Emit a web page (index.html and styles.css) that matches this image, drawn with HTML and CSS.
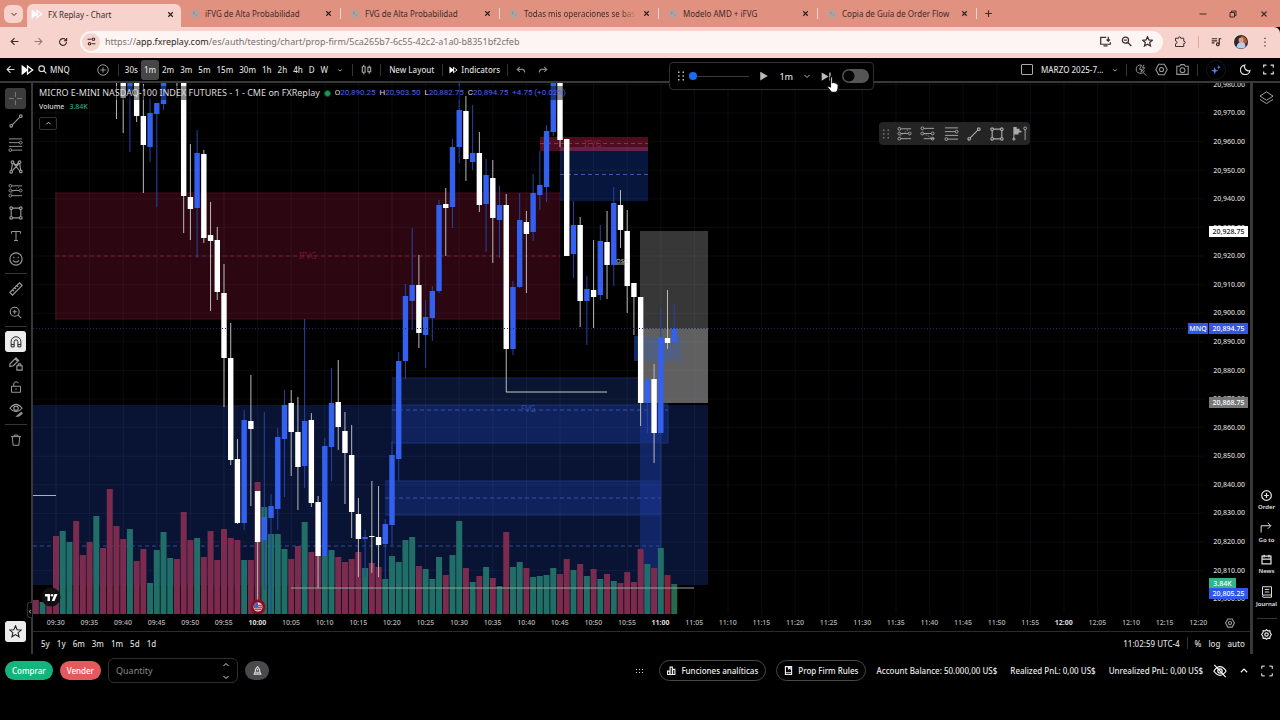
FILE: index.html
```
<!DOCTYPE html>
<html lang="es">
<head>
<meta charset="utf-8">
<title>FX Replay - Chart</title>
<link rel="stylesheet" href="styles.css">
</head>
<body>
<svg class="sprite" aria-hidden="true">
  <symbol id="x" viewBox="0 0 16 16"><path d="M4 4l8 8M12 4l-8 8"/></symbol>
  <symbol id="down" viewBox="0 0 16 16"><path d="M3 6l5 5 5-5"/></symbol>
  <symbol id="up" viewBox="0 0 16 16"><path d="M3 10l5-5 5 5"/></symbol>
  <symbol id="back" viewBox="0 0 16 16"><path d="M15 8H2M8 2L2 8l6 6"/></symbol>
  <symbol id="forward" viewBox="0 0 16 16"><path d="M1 8h13M8 2l6 6-6 6"/></symbol>
  <symbol id="reload" viewBox="0 0 16 16"><path d="M13.5 8A5.5 5.5 0 1 1 12 4.2L13.5 6M13.8 1.5V6H9.5"/></symbol>
  <symbol id="tune" viewBox="0 0 16 16"><path d="M1 4h7M8 12h7"/><circle cx="11.5" cy="4" r="2.2"/><circle cx="4.500" cy="12" r="2.200"/></symbol>
  <symbol id="logo" viewBox="0 0 20 16"><path class="solid" d="M1 0l10 8-10 8z"/><path d="M10 2l8 6-8 6V2z"/></symbol>
  <symbol id="globe" viewBox="0 0 16 16"><circle class="solid" cx="8" cy="8" r="7"/><path class="land" d="M4 5l3-1 1 2-2 3zM9 9l3-1-1 3z"/></symbol>
  <symbol id="search" viewBox="0 0 16 16"><circle cx="6.500" cy="6.500" r="5"/><path d="M10 10l5 5"/></symbol>
  <symbol id="plusc" viewBox="0 0 16 16"><circle cx="8" cy="8" r="7"/><path d="M8 4.500v7M4.500 8h7"/></symbol>
  <symbol id="plus" viewBox="0 0 16 16"><path d="M8 2v12M2 8h12"/></symbol>
  <symbol id="candles" viewBox="0 0 16 16"><path d="M2 4h4v8H2zM4 1v3M4 12v3M10 5h4v6h-4zM12 2v3M12 11v3"/></symbol>
  <symbol id="undo" viewBox="0 0 16 16"><path d="M6 3L2 7l4 4M2 7h8q4 0 4 5"/></symbol>
  <symbol id="redo" viewBox="0 0 16 16"><path d="M10 3l4 4-4 4M14 7H6q-4 0-4 5"/></symbol>
  <symbol id="hex" viewBox="0 0 16 16"><path d="M4.500 1.500h7L15 8l-3.500 6.500h-7L1 8z"/><circle cx="8" cy="8" r="2.500"/></symbol>
  <symbol id="camera" viewBox="0 0 16 16"><path d="M1 4h3.500L6 2h4l1.500 2H15v10H1z"/><circle cx="8" cy="8.800" r="3"/></symbol>
  <symbol id="flashsearch" viewBox="0 0 16 16"><path d="M8 1.500a5.500 5.500 0 1 0 4.500 7M10.500 11l4.500 4.500M9 1L6 7h3l-1 4 5-6h-3l2-4"/></symbol>
  <symbol id="spark" viewBox="0 0 16 16"><path class="solid" d="M6 3l1.500 4.500L12 9l-4.500 1.500L6 15l-1.500-4.500L0 9l4.500-1.500zM12.500 0l.9 2.600L16 3.500l-2.600.9-.9 2.600-.9-2.600-2.600-.9 2.600-.9z"/></symbol>
  <symbol id="moon" viewBox="0 0 16 16"><path d="M7 1.500a6 6 0 0 0 7.500 8A7 7 0 1 1 7 1.500z"/></symbol>
  <symbol id="full" viewBox="0 0 16 16"><path d="M1 5V1.500h4M11 1.500h4V5M15 11v3.500h-4M5 14.500H1V11"/></symbol>
  <symbol id="install" viewBox="0 0 16 16"><path d="M9 2H1v10h14V9M5 14.500h6M12 1v6M9.500 5L12 7.500 14.500 5"/></symbol>
  <symbol id="zoomout" viewBox="0 0 16 16"><circle cx="6.500" cy="6" r="4.500"/><path d="M10 9.500l5 5M4.500 6h4"/></symbol>
  <symbol id="star" viewBox="0 0 16 16"><path d="M8 1l2 4.800 5 .4-3.800 3.300 1.200 5L8 11.800 3.600 14.500l1.200-5L1 6.200l5-.4z"/></symbol>
  <symbol id="puzzle" viewBox="0 0 16 16"><path d="M2 3h4q0-2 1.500-2T9 3h4v4q2 0 2 1.500T13 10v4H2v-3.500q2 0 2-2T2 6.500z"/></symbol>
  <symbol id="music" viewBox="0 0 16 16"><path d="M1 4h8M1 7h8M1 10h4M12 12V4h3"/><circle cx="10" cy="12" r="2"/></symbol>
  <symbol id="dots" viewBox="0 0 16 16"><path class="solid" d="M7 1h2v2H7zM7 7h2v2H7zM7 13h2v2H7z"/></symbol>
  <symbol id="cross" viewBox="0 0 16 16"><path d="M8 0v6M8 10v6M0 8h6M10 8h6"/></symbol>
  <symbol id="line" viewBox="0 0 16 16"><circle cx="2.500" cy="13.500" r="1.500"/><circle cx="13.500" cy="2.500" r="1.500"/><path d="M3.600 12.400l8.800-8.800"/></symbol>
  <symbol id="fib" viewBox="0 0 16 16"><path d="M1 2h14M1 6h11M1 10h14M4 14h11"/><circle cx="13.500" cy="6" r="1.500"/><circle cx="2.500" cy="14" r="1.500"/></symbol>
  <symbol id="xabcd" viewBox="0 0 16 16"><path d="M2.500 12L4 4M5 4l7 8M11.500 4L4 12M12.300 4l1 8M5.500 3.500L8 6l3-3"/><circle cx="2.500" cy="13.500" r="1.500"/><circle cx="4" cy="2.500" r="1.500"/><circle cx="12" cy="2.500" r="1.500"/><circle cx="13.500" cy="13" r="1.500"/></symbol>
  <symbol id="pos" viewBox="0 0 16 16"><path d="M4 3h11M4 8h8M4 13.500h11"/><path stroke-dasharray="1 1.500" d="M3 11L12 4"/><circle cx="2.500" cy="3" r="1.500"/><circle cx="2.500" cy="8" r="1.500"/><circle cx="13.500" cy="8" r="1.500"/><circle cx="2.500" cy="13.500" r="1.500"/></symbol>
  <symbol id="short" viewBox="0 0 16 16"><path d="M4 2.500h11M4 8h8M4 13.500h11"/><path stroke-dasharray="1 1.500" d="M4 8l9 5"/><circle cx="2.500" cy="2.500" r="1.500"/><circle cx="2.500" cy="8" r="1.500"/><circle cx="13.500" cy="8" r="1.500"/><circle cx="13.500" cy="13.500" r="1.500"/></symbol>
  <symbol id="rect" viewBox="0 0 16 16"><path d="M4 2.500h8M4 13.500h8M2.500 4v8M13.500 4v8"/><circle cx="2.500" cy="2.500" r="1.500"/><circle cx="13.500" cy="2.500" r="1.500"/><circle cx="2.500" cy="13.500" r="1.500"/><circle cx="13.500" cy="13.500" r="1.500"/></symbol>
  <symbol id="ttool" viewBox="0 0 16 16"><path d="M2 5V2h12v3M8 2v12M5.500 14h5"/></symbol>
  <symbol id="smile" viewBox="0 0 16 16"><circle cx="8" cy="8" r="7"/><path d="M4.500 9.500q3.500 4 7 0M5.500 5.500v1.500M10.500 5.500v1.500"/></symbol>
  <symbol id="ruler" viewBox="0 0 16 16"><path d="M1 12L12 1l3 3L4 15zM4 9l1.500 1.500M6.500 6.500L8 8M9 4l1.500 1.500"/></symbol>
  <symbol id="zoomin" viewBox="0 0 16 16"><circle cx="7" cy="7" r="5.500"/><path d="M11 11l4 4M7 4.500v5M4.500 7h5"/></symbol>
  <symbol id="magnet" viewBox="0 0 16 16"><path d="M1.500 14.500V7.500a6.500 6.500 0 0 1 13 0v7h-4v-7a2.500 2.500 0 0 0-5 0v7zM1.500 11.500h4M10.500 11.500h4"/></symbol>
  <symbol id="penlock" viewBox="0 0 16 16"><path d="M1 11V8l7-7 3 3-6 6zM7 2l3 3M9 10h6v5H9zM10.500 10V8.500q1.500-2 3 0V10"/></symbol>
  <symbol id="lock" viewBox="0 0 16 16"><path d="M2 7h12v8H2zM5 7V4q0-3 3-3t3 2M8 10v2"/></symbol>
  <symbol id="eyepen" viewBox="0 0 16 16"><path d="M1 6q7-9 14 0-7 8-14 0zM9 15l5-4 1 1-4 3z"/><circle cx="8" cy="6" r="2.500"/></symbol>
  <symbol id="trash" viewBox="0 0 16 16"><path d="M1.500 3.500h13M5.500 3.500v-2h5v2M3 3.500l1.200 11.500h7.600L13 3.500"/></symbol>
  <symbol id="layers" viewBox="0 0 16 16"><path d="M8 2l7 4.500L8 11 1 6.500zM1 10l7 4.500L15 10"/></symbol>
  <symbol id="goto" viewBox="0 0 16 16"><path d="M1.500 14V5H14M10.500 1L14.500 5l-4 4"/></symbol>
  <symbol id="cal" viewBox="0 0 16 16"><path d="M1.500 3h13v11.500h-13zM1.500 7.500h13M4.500 1v4M11.500 1v4"/></symbol>
  <symbol id="journal" viewBox="0 0 16 16"><path d="M2 12V1h12v11M4 12h10v3H4q-2 0-2-1.500T4 12M5 4.500h6M5 8h6"/></symbol>
  <symbol id="bars" viewBox="0 0 16 16"><path d="M1 9h4v6H1zM5.500 2h4v13h-4zM10 6h4v9h-4z"/></symbol>
  <symbol id="book" viewBox="0 0 16 16"><path d="M2.500 1h11v11h-11zM2.500 12v3h11v-3"/><path class="solid" d="M7 1h5v6L9.500 5 7 7z"/></symbol>
  <symbol id="eyeoff" viewBox="0 0 16 16"><path d="M1 8q7-10 14 0-7 10-14 0zM1.500 1l13 14"/><circle cx="8" cy="8" r="2.500"/></symbol>
  <symbol id="rocket" viewBox="0 0 16 16"><path d="M8 1Q3.500 5 4 11h8q.5-6-4-10zM4 10l-2 4.500h12L12 10M7 14h2M8 5v3"/></symbol>
  <symbol id="gear" viewBox="0 0 16 16"><path d="M8 1l2 1.800 2.800-.3.400 2.700L15 8l-1.800 2.800-.4 2.700-2.800-.3L8 15l-2-1.800-2.800.3-.4-2.700L1 8l1.800-2.800.4-2.700 2.800.3z"/><circle cx="8" cy="8" r="2.500"/></symbol>
  <symbol id="grip" viewBox="0 0 10 16"><path class="solid" d="M1 2h2v2H1zM7 2h2v2H7zM1 7h2v2H1zM7 7h2v2H7zM1 12h2v2H1zM7 12h2v2H7z"/></symbol>
  <symbol id="play" viewBox="0 0 16 16"><path class="solid" d="M2 1l12 7-12 7z"/></symbol>
  <symbol id="next" viewBox="0 0 16 16"><path class="solid" d="M1 2l10 6-10 6zM12 2h2v12h-2z"/></symbol>
  <symbol id="flag" viewBox="0 0 16 16"><path class="solid" d="M2 1h3v2h3v2h2v2H7v2H2z"/><path d="M2 1v14M14 4v11"/><circle cx="2" cy="14" r="1.200"/><circle cx="14" cy="2.500" r="1.500"/></symbol>
</svg>

<header class="browser">
  <nav class="tabs">
    <button class="tab-menu" aria-label="Buscar pestañas"><svg class="i8"><use href="#down"/></svg></button>
    <div class="tab tab-on"><svg class="logo white"><use href="#logo"/></svg><a href="#">FX Replay - Chart</a><button aria-label="Cerrar"><svg class="i9"><use href="#x"/></svg></button></div>
    <div class="tab"><svg class="i10 globe"><use href="#globe"/></svg><a href="#">iFVG de Alta Probabilidad</a><button aria-label="Cerrar"><svg class="i9"><use href="#x"/></svg></button></div>
    <div class="tab"><svg class="i10 globe"><use href="#globe"/></svg><a href="#">FVG de Alta Probabilidad</a><button aria-label="Cerrar"><svg class="i9"><use href="#x"/></svg></button></div>
    <div class="tab"><svg class="i10 globe"><use href="#globe"/></svg><a href="#" class="fade">Todas mis operaciones se basa</a><button aria-label="Cerrar"><svg class="i9"><use href="#x"/></svg></button></div>
    <div class="tab"><svg class="i10 globe"><use href="#globe"/></svg><a href="#">Modelo AMD + iFVG</a><button aria-label="Cerrar"><svg class="i9"><use href="#x"/></svg></button></div>
    <div class="tab"><svg class="i10 globe"><use href="#globe"/></svg><a href="#">Copia de Guía de Order Flow</a><button aria-label="Cerrar"><svg class="i9"><use href="#x"/></svg></button></div>
    <button class="new-tab" aria-label="Nueva pestaña"><svg class="i9"><use href="#plus"/></svg></button>
    <div class="window-buttons">
      <button aria-label="Minimizar"><svg class="i8" viewBox="0 0 16 16"><path d="M1 8h14"/></svg></button>
      <button aria-label="Restaurar"><svg class="i8" viewBox="0 0 16 16"><path d="M2 5h9v9H2zM5 5V2h9v9h-3"/></svg></button>
      <button aria-label="Cerrar ventana"><svg class="i10"><use href="#x"/></svg></button>
    </div>
  </nav>
  <div class="address">
    <div class="history">
      <button aria-label="Atrás"><svg class="i9"><use href="#back"/></svg></button>
      <button aria-label="Adelante" class="muted"><svg class="i9"><use href="#forward"/></svg></button>
      <button aria-label="Recargar"><svg class="i10"><use href="#reload"/></svg></button>
    </div>
    <div class="omnibox">
      <button class="site" aria-label="Información del sitio"><svg class="i9"><use href="#tune"/></svg></button>
      <a class="url" href="#">https://<b>app.fxreplay.com</b>/es/auth/testing/chart/prop-firm/5ca265b7-6c55-42c2-a1a0-b8351bf2cfeb</a>
      <button aria-label="Instalar"><svg class="i11"><use href="#install"/></svg></button>
      <button aria-label="Zoom"><svg class="i11"><use href="#zoomout"/></svg></button>
      <button aria-label="Marcador"><svg class="i11"><use href="#star"/></svg></button>
    </div>
    <div class="extras">
      <button aria-label="Extensiones"><svg class="i12"><use href="#puzzle"/></svg></button>
      <span class="bar"></span>
      <button aria-label="Multimedia"><svg class="i11"><use href="#music"/></svg></button>
      <button aria-label="Perfil"><svg class="avatar" viewBox="0 0 14 14"><circle cx="7" cy="7" r="7" fill="#33272b"/><path d="M7 1q6 0 6 7l-3 1-3-5z" fill="#b4582f"/><circle cx="7" cy="5" r="2.500" fill="#d9a184"/><path d="M2.500 12q1-5 5-5t4 5q-4 3-9 0z" fill="#b9cdea"/></svg></button>
      <button aria-label="Menú"><svg class="i10"><use href="#dots"/></svg></button>
    </div>
  </div>
</header>

<div class="app">
  <div class="toolbar">
    <button aria-label="Volver"><svg class="i9"><use href="#back"/></svg></button>
    <svg class="logo app-logo white"><use href="#logo"/></svg>
    <button class="symbol"><svg class="i9"><use href="#search"/></svg>MNQ</button>
    <button aria-label="Comparar" class="compare"><svg class="i12"><use href="#plusc"/></svg></button>
    <span class="bar"></span>
    <div class="intervals">
      <button>30s</button><button class="on">1m</button><button>2m</button><button>3m</button><button>5m</button><button>15m</button><button>30m</button><button>1h</button><button>2h</button><button>4h</button><button>D</button><button>W</button>
      <button aria-label="Más" class="more"><svg class="i6"><use href="#down"/></svg></button>
    </div>
    <span class="bar"></span>
    <button aria-label="Tipo de gráfico" class="wide gray"><svg class="i11"><use href="#candles"/></svg></button>
    <span class="bar"></span>
    <button class="wide">New Layout</button>
    <span class="bar"></span>
    <button class="wide indicators"><svg class="mini-logo white"><use href="#logo"/></svg>Indicators</button>
    <span class="bar"></span>
    <button aria-label="Deshacer" class="wide dim"><svg class="i10"><use href="#undo"/></svg></button>
    <button aria-label="Rehacer" class="dim"><svg class="i10"><use href="#redo"/></svg></button>
    <div class="toolbar-right">
      <input type="checkbox" class="box" aria-label="Diseño">
      <span class="pick"><select aria-label="Sesión"><option>MARZO 2025-7...</option></select><svg class="i6"><use href="#down"/></svg></span>
      <span class="bar"></span>
      <button aria-label="Búsqueda rápida" class="gray"><svg class="i12"><use href="#flashsearch"/></svg></button>
      <button aria-label="Ajustes" class="gray"><svg class="i13"><use href="#hex"/></svg></button>
      <button aria-label="Captura" class="gray"><svg class="i13"><use href="#camera"/></svg></button>
      <span class="bar"></span>
      <button aria-label="IA" class="ai"><svg class="i10"><use href="#spark"/></svg></button>
      <button aria-label="Tema" class="theme"><svg class="i11"><use href="#moon"/></svg></button>
      <button aria-label="Pantalla completa"><svg class="i11"><use href="#full"/></svg></button>
    </div>
  </div>

  <main class="main">
    <aside class="tools">
      <button class="on" aria-label="Cursor"><svg class="i13"><use href="#cross"/></svg></button>
      <button aria-label="Línea"><svg class="i14"><use href="#line"/></svg></button>
      <button aria-label="Fibonacci"><svg class="i15"><use href="#fib"/></svg></button>
      <button aria-label="Patrones"><svg class="i14"><use href="#xabcd"/></svg></button>
      <button aria-label="Predicción"><svg class="i15"><use href="#pos"/></svg></button>
      <button aria-label="Rectángulo"><svg class="i14"><use href="#rect"/></svg></button>
      <button aria-label="Texto"><svg class="i12"><use href="#ttool"/></svg></button>
      <button aria-label="Emoji"><svg class="i14"><use href="#smile"/></svg></button>
      <hr>
      <button aria-label="Regla"><svg class="i14"><use href="#ruler"/></svg></button>
      <button aria-label="Ampliar"><svg class="i13"><use href="#zoomin"/></svg></button>
      <hr>
      <button class="lit" aria-label="Imán"><svg class="i12"><use href="#magnet"/></svg></button>
      <button aria-label="Bloquear dibujo"><svg class="i14"><use href="#penlock"/></svg></button>
      <button aria-label="Bloquear"><svg class="i12"><use href="#lock"/></svg></button>
      <button aria-label="Ocultar"><svg class="i14"><use href="#eyepen"/></svg></button>
      <hr>
      <button aria-label="Borrar"><svg class="i12"><use href="#trash"/></svg></button>
      <button class="lit last" aria-label="Favoritos"><svg class="i13"><use href="#star"/></svg></button>
    </aside>

    <section class="chart">
      <div class="plot-row">
        <svg class="plot" id="plot" viewBox="33 83 1174 531" preserveAspectRatio="none" role="img" aria-label="Gráfico de velas MNQ"></svg>
        <div class="prices">
          <ol id="prices"></ol>
          <span class="tag t-white">20,928.75</span>
          <span class="tag t-blue">20,894.75</span>
          <span class="tag t-blue t-symbol">MNQ</span>
          <span class="tag t-gray">20,868.75</span>
          <span class="tag t-green">3.84K</span>
          <span class="tag t-low">20,805.25</span>
        </div>
        <div class="legend">
          <h1>MICRO E-MINI NASDAQ-100 INDEX FUTURES - 1 - CME on FXReplay</h1>
          <i class="dot"></i>
          <p>O<b>20,890.25</b></p><p>H<b>20,903.50</b></p><p>L<b>20,882.75</b></p><p>C<b>20,894.75</b></p><p><b>+4.75 (+0.02%)</b></p>
        </div>
        <div class="study"><span>Volume</span><em>3.84K</em></div>
        <button class="collapse" aria-label="Contraer"><svg class="i7"><use href="#up"/></svg></button>
        <svg class="tv" viewBox="0 0 20 20"><circle cx="10" cy="10" r="9.500" fill="#111"/><path fill="#fff" d="M4 7h5v7H6.500V9.500H4zM13.500 7h3l-3 7h-2.800z"/><circle cx="11" cy="8.300" r="1.300" fill="#fff"/></svg>
        <svg class="event" viewBox="0 0 16 16"><circle cx="8" cy="8" r="7.500" fill="#8b0d22"/><circle cx="8" cy="8" r="4.500" fill="#e8dfe8"/><path stroke="#c8405a" d="M4 8.500h8M4.500 10.500h7M8 6.500h4"/><path fill="#3566c8" d="M8 3.500V8H3.500Q4 4 8 3.500z"/></svg>
      </div>
      <div class="times"><ol id="times"></ol><button aria-label="Ajustes del eje"><svg class="i10"><use href="#hex"/></svg></button></div>
      <div class="ranges">
        <button>5y</button><button>1y</button><button>6m</button><button>3m</button><button>1m</button><button>5d</button><button>1d</button>
        <div class="ranges-right"><button>11:02:59 UTC-4</button><span class="bar"></span><button>%</button><button>log</button><button>auto</button></div>
      </div>
      <button class="handle" aria-label="Ocultar herramientas">‹</button>
    </section>

    <aside class="side">
      <button aria-label="Capas"><svg class="i15"><use href="#layers"/></svg></button>
      <button class="push"><svg class="i11"><use href="#plusc"/></svg>Order</button>
      <button><svg class="i12"><use href="#goto"/></svg>Go to</button>
      <button><svg class="i11"><use href="#cal"/></svg>News</button>
      <button><svg class="i12"><use href="#journal"/></svg>Journal</button>
      <hr>
      <button aria-label="Configuración" class="settings"><svg class="i11"><use href="#gear"/></svg></button>
    </aside>
  </main>

  <footer class="trade">
    <button class="buy">Comprar</button>
    <button class="sell">Vender</button>
    <div class="quantity"><input type="text" placeholder="Quantity" aria-label="Quantity"><span><button aria-label="Más"><svg class="i8"><use href="#up"/></svg></button><button aria-label="Menos"><svg class="i8"><use href="#down"/></svg></button></span></div>
    <button class="rocket" aria-label="Orden rápida"><svg class="i9"><use href="#rocket"/></svg></button>
    <div class="trade-right">
      <svg class="six" viewBox="0 0 10 6"><path class="solid" d="M1 1h1v1H1zM4 1h1v1H4zM7 1h1v1H7zM1 4h1v1H1zM4 4h1v1H4zM7 4h1v1H7z"/></svg>
      <button class="pill"><svg class="i9"><use href="#bars"/></svg>Funciones analíticas</button>
      <button class="pill"><svg class="i9"><use href="#book"/></svg>Prop Firm Rules</button>
      <span class="money">Account Balance: 50.000,00 US$</span>
      <span class="money">Realized PnL: 0,00 US$</span>
      <span class="money">Unrealized PnL: 0,00 US$</span>
      <button aria-label="Ocultar saldo"><svg class="i14"><use href="#eyeoff"/></svg></button>
      <button aria-label="Desplegar"><svg class="i10"><use href="#up"/></svg></button>
      <button aria-label="Expandir"><svg class="i12"><use href="#full"/></svg></button>
    </div>
  </footer>

  <div class="replay">
    <svg class="grip"><use href="#grip"/></svg>
    <input type="range" min="0" max="100" value="0" aria-label="Velocidad">
    <button aria-label="Reproducir"><svg class="i10"><use href="#play"/></svg></button>
    <span class="pick"><select aria-label="Intervalo"><option>1m</option></select><svg class="i8"><use href="#down"/></svg></span>
    <button aria-label="Siguiente"><svg class="i11"><use href="#next"/></svg></button>
    <input type="checkbox" class="switch" aria-label="Automático">
  </div>
  <svg class="hand" viewBox="0 0 12 16"><path fill="#fff" stroke="#111" d="M4 8V2q0-1.500 1-1.500T6 2v4q2-1 2.500.5 1.500-.5 1.800.8 1.200 0 1.200 1.700 0 6-2.500 6.500H5L1 10.500Q1 8.500 4 10z"/></svg>
  <div class="favorites">
    <svg class="grip"><use href="#grip"/></svg>
    <button aria-label="Posición larga"><svg class="i15"><use href="#pos"/></svg></button>
    <button aria-label="Posición corta"><svg class="i15"><use href="#short"/></svg></button>
    <button aria-label="Fibonacci"><svg class="i15"><use href="#fib"/></svg></button>
    <button aria-label="Línea"><svg class="i14"><use href="#line"/></svg></button>
    <button aria-label="Rectángulo"><svg class="i14"><use href="#rect"/></svg></button>
    <button aria-label="Perfil de volumen"><svg class="i15"><use href="#flag"/></svg></button>
  </div>
</div>
<script src="chart.js"></script>
</body>
</html>
```
FILE: styles.css
```
* { box-sizing: border-box; }
body { margin: 0; height: 100vh; min-height: 600px; display: flex; flex-direction: column; background: #000; color: #ddd; font-family: "Noto Sans", "Open Sans", sans-serif; font-size: 8px; overflow: hidden; }
button, input, select { font: inherit; color: inherit; background: none; border: 0; padding: 0; margin: 0; }
button { display: flex; align-items: center; justify-content: center; white-space: nowrap; }
a { color: inherit; text-decoration: none; }
svg { flex: none; fill: none; stroke: currentColor; stroke-width: 1.3; display: block; }
.solid { fill: currentColor; stroke: none; }
.land { fill: #8793a5; stroke: none; }
.sprite { position: absolute; width: 0; height: 0; }
.i6 { width: 6px; height: 6px; stroke-width: 2; }
.i7 { width: 7px; height: 7px; stroke-width: 2; }
.i8 { width: 8px; height: 8px; stroke-width: 2; }
.i9 { width: 9px; height: 9px; stroke-width: 2; }
.i10 { width: 10px; height: 10px; stroke-width: 1.8; }
.i11 { width: 11px; height: 11px; stroke-width: 1.8; }
.i12 { width: 12px; height: 12px; }
.i13 { width: 13px; height: 13px; }
.i14 { width: 14px; height: 14px; }
.i15 { width: 15px; height: 15px; stroke-width: 1; }
.logo { width: 12px; height: 10px; }
.white { color: #fff; stroke-width: 2; }
.app-logo { width: 13px; height: 12px; }
.mini-logo { width: 9px; height: 8px; }
.bar { width: 1px; height: 12px; background: #333; flex: none; }
hr { width: 22px; height: 1px; border: 0; margin: 2px auto 3px; background: #353535; }
ol { list-style: none; margin: 0; padding: 0; }

.browser { color: #3f2b29; flex: none; }
.tabs { display: flex; align-items: center; height: 27px; padding-left: 4px; background: #e19180; }
.tab-menu { width: 19px; height: 18px; border-radius: 6px; background: #f6d3cd; margin-right: 4px; }
.tab { flex: 0 1 159px; display: flex; align-items: center; gap: 5px; height: 19px; padding: 0 7px 0 9px; position: relative; min-width: 0; }
.tab a { flex: 1; overflow: hidden; white-space: nowrap; }
.tab .i9 { color: #26201f; }
.tab + .tab:not(:nth-child(3)) { border-left: 1px solid #f6d3cd; height: 11px; }
.tab-on { flex-basis: 154px; align-self: flex-end; height: 23px; padding: 0 6px 3px 4px; border-radius: 6px 6px 0 0; background: #f6d3cd; }
.globe { color: #b3a19f; }
.fade { -webkit-mask-image: linear-gradient(90deg, #000 85%, transparent); mask-image: linear-gradient(90deg, #000 85%, transparent); }
.new-tab { border-left: 1px solid #f6d3cd; height: 11px; padding-left: 7px; }
.window-buttons { margin-left: auto; display: flex; gap: 22px; padding-right: 11px; }
.address { display: flex; align-items: center; height: 31px; padding: 0 10px 2px; background: #f6d3cd; border-radius: 0 6px 0 0; }
.history { display: flex; gap: 15px; margin-right: 12px; }
.muted { color: #9a7773; }
.omnibox { flex: 1; display: flex; align-items: center; gap: 10px; height: 22px; padding: 0 10px 0 2px; border-radius: 11px; background: #fcf5f3; min-width: 0; }
.site { width: 18px; height: 18px; border-radius: 9px; background: #f6d3cd; margin-right: -5px; }
.url { flex: 1; font-size: 9px; color: #7b706e; overflow: hidden; white-space: nowrap; }
.url b { font-weight: 400; color: #2d2524; }
.extras { display: flex; align-items: center; gap: 12px; padding-left: 11px; }
.extras .bar { background: #e6a79b; }
.avatar { width: 14px; height: 14px; stroke: none; }

.app { flex: 1; display: flex; flex-direction: column; position: relative; min-height: 0; }
.toolbar { display: flex; align-items: center; height: 25px; padding: 0 6px; border-bottom: 2px solid #383838; flex: none; font-weight: 500; }
.symbol { gap: 3px; margin-left: 4px; }
.app-logo { margin-left: 6px; }
.compare { color: #999; margin: 0 9px 0 27px; }
.intervals { display: flex; padding: 0 6px 0 3px; }
.intervals button { padding: 0 3px; height: 20px; border-radius: 3px; }
.intervals .on { background: #464646; }
.intervals .more { margin-left: 3px; }
.wide { margin: 0 8px; }
.indicators { gap: 3px; margin: 0 7px 0 6px; }
.dim { color: #888; margin-right: 12px; }
.toolbar-right { margin-left: auto; display: flex; align-items: center; gap: 8px; }
.box { appearance: none; width: 12px; height: 11px; border: 1px solid #aaa; border-radius: 1px; }
.pick { display: flex; align-items: center; gap: 8px; }
.pick select { appearance: none; font-weight: 500; }
.gray { color: #999; }
.ai { width: 20px; height: 20px; border-radius: 10px; border: 1px solid #14161c; color: #5b82f2; }
.theme { margin: 0 4px 0 6px; }

.main { flex: 1; display: flex; min-height: 0; }
.tools { width: 31px; padding: 5px 5px 0; display: flex; flex-direction: column; gap: 1px; color: #9b9b9b; }
.tools button { height: 22px; width: 21px; flex: none; border-radius: 3px; }
.tools .on { background: #3c3c3c; color: #777; height: 21px; }
.tools .lit { background: #ececec; color: #222; height: 21px; }
.tools .last { margin-top: auto; margin-bottom: 13px; }
.chart { flex: 1; display: flex; flex-direction: column; position: relative; min-width: 0; border-left: 2px solid #383838; border-right: 3px solid #383838; margin-bottom: 1px; }
.plot-row { flex: 1; display: flex; position: relative; min-height: 0; overflow: hidden; }
.plot { flex: 1; min-width: 0; height: 100%; stroke: none; }
.plot text { font-size: 8px; }
.prices { width: 43px; position: relative; font-size: 7px; font-weight: 500; color: #d4d4d4; }
#prices { position: absolute; inset: -13px 0 1px; display: grid; grid-auto-rows: 1fr; align-items: center; text-align: right; padding-right: 5px; }
.tag { position: absolute; left: 2px; width: 39px; height: 11px; margin-top: 1px; line-height: 11px; text-align: center; color: #fff; }
.t-white { top: 27%; margin-top: 0; background: #fff; color: #111; }
.t-blue { top: 45%; background: #2f58e8; }
.t-symbol { left: -19px; width: 20px; }
.t-gray { top: 59%; background: #77777b; }
.t-green { top: 93%; width: 27px; background: #35b48a; }
.t-low { top: 95%; background: #2f58e8; }
.legend { position: absolute; top: 3px; left: 6px; right: 60px; display: flex; align-items: center; gap: 4px; white-space: nowrap; font-family: Roboto, "Noto Sans", sans-serif; line-height: 14px; }
.legend h1, .legend p { margin: 0; background: rgba(0, 0, 0, .45); }
.legend h1 { font-family: "Noto Sans", "Open Sans", sans-serif; font-size: 9px; font-weight: 400; }
.legend b { font-weight: 400; color: #4a66ec; }
.dot { width: 7px; height: 7px; border-radius: 4px; background: #18985f; border: 1px solid #0b4a2d; }
.study { position: absolute; top: 18px; left: 6px; display: flex; gap: 5px; font-size: 7px; font-weight: 500; line-height: 12px; }
.study em { font-style: normal; color: #35a87d; }
.collapse { position: absolute; top: 34px; left: 6px; width: 18px; height: 13px; border: 1px solid #333; border-radius: 2px; }
.tv { position: absolute; left: 8px; bottom: 7px; width: 20px; height: 20px; stroke: none; }
.event { position: absolute; left: 18%; margin-left: -2px; bottom: -1px; width: 16px; height: 16px; stroke: none; }
.times { display: flex; height: 18px; border-bottom: 1px solid #2c2c2c; padding-left: 6px; font-size: 7px; font-weight: 500; color: #b8b8b8; }
#times { flex: 1; display: grid; grid-auto-flow: column; grid-auto-columns: 1fr; align-items: center; text-align: center; }
#times .hour { font-weight: 700; color: #ddd; }
.times button { width: 35px; color: #999; padding-right: 6px; }
.ranges { display: flex; align-items: center; gap: 7px; height: 22px; padding: 0 5px 0 8px; font-weight: 500; }
.ranges-right { margin-left: auto; display: flex; align-items: center; gap: 7px; }
.handle { position: absolute; left: -6px; bottom: 36px; width: 5px; height: 16px; border: 1px solid #333; border-right: 0; border-radius: 3px 0 0 3px; background: #000; }
.side { width: 27px; display: flex; flex-direction: column; align-items: center; padding-top: 7px; font-size: 6px; font-weight: 600; }
.side button { flex-direction: column; gap: 2px; line-height: 8px; height: 21px; margin-bottom: 11px; color: #e2e2e2; }
.side > :first-child { color: #aaa; height: 15px; }
.side .push { margin-top: auto; }
.side hr { margin: 0 auto; width: 20px; }
.side .settings { height: 11px; margin: 10px 0 15px; }

.trade { display: flex; align-items: center; height: 65px; padding: 0 5px 34px; gap: 7px; flex: none; font-weight: 500; }
.buy, .sell { height: 19px; border-radius: 10px; padding: 0 7px; color: #fff; font-weight: 500; background: #14b57d; }
.sell { background: #e25a5c; }
.quantity { display: flex; align-items: center; width: 130px; height: 25px; border: 1px solid #303030; border-radius: 6px; padding: 0 7px; }
.quantity input { flex: 1; min-width: 0; font-size: 9px; font-weight: 400; outline: 0; }
.quantity input::placeholder { color: #888; opacity: 1; }
.quantity span { display: flex; flex-direction: column; gap: 4px; }
.rocket { width: 24px; height: 19px; border-radius: 10px; background: #4a4a4c; }
.trade-right { margin-left: auto; display: flex; align-items: center; gap: 10px; }
.six { width: 10px; height: 6px; margin-right: 4px; }
.pill { gap: 5px; height: 21px; border: 1px solid #484848; border-radius: 11px; padding: 0 7px; color: #eee; }
.money { white-space: nowrap; color: #e8e8e8; }
.money + .money { margin-left: 3px; }
.trade-right > button:not(.pill) { color: #fff; margin-right: 2px; }

.replay { position: absolute; top: 4px; left: 52.3%; width: 205px; height: 28px; display: flex; align-items: center; justify-content: space-between; padding: 0 4px 0 7px; border: 1px solid #303030; border-radius: 4px; background: #000; color: #bbb; }
.grip { width: 8px; height: 12px; }
.replay input[type="range"] { appearance: none; width: 60px; height: 8px; margin-left: -6px; background: linear-gradient(#3c3c3c, #3c3c3c) center / 100% 1px no-repeat; }
.replay input[type="range"]::-webkit-slider-thumb { appearance: none; width: 8px; height: 8px; border-radius: 4px; background: #176cf0; }
.replay .pick { gap: 10px; }
.replay .pick select { font-size: 9px; color: #ddd; }
.switch { appearance: none; width: 27px; height: 14px; border-radius: 7px; background: radial-gradient(circle at 7px 7px, #050505 5px, #555 6px); }
.hand { position: absolute; left: 64.5%; top: 18px; width: 13px; height: 17px; }
.favorites { position: absolute; top: 64px; left: 68.7%; width: 151px; height: 23px; display: flex; align-items: center; justify-content: space-between; padding: 0 3px; border-radius: 4px; background: #242424; color: #aaa; }
.favorites .grip { color: #777; margin-right: -2px; }
```
FILE: chart.js
```
const NS = "http://www.w3.org/2000/svg";
const plot = document.getElementById("plot");
const X0 = 56, STEP = 6.72, BASE = 614;

function add(tag, attrs, text) {
  const el = document.createElementNS(NS, tag);
  for (const k in attrs) el.setAttribute(k, attrs[k]);
  if (text) el.textContent = text;
  plot.appendChild(el);
  return el;
}
const rect = (x1, y1, x2, y2, fill) => add("rect", { x: x1, y: y1, width: x2 - x1, height: y2 - y1, fill });
const line = (x1, y1, x2, y2, stroke, dash) => add("line", { x1, y1, x2, y2, stroke, "stroke-width": 1, "stroke-dasharray": dash || "none" });

// zones
rect(55, 193, 560, 319, "#2c0711");
line(55, 193, 560, 193, "#460d1b");
line(55, 319, 560, 319, "#460d1b");
rect(33, 405, 708, 585, "#091434");
rect(392, 378, 668, 405, "#0a1531");
rect(392, 405, 668, 443, "#10225b");
rect(385, 481, 661, 515, "#10225b");
rect(640, 403, 661, 614, "rgba(35,65,190,.35)");
line(392, 378, 668, 378, "#17295c");
line(392, 405, 668, 405, "#1b3070");
line(392, 443, 668, 443, "#1b3275");
line(668, 405, 668, 443, "#1b3275");
line(385, 481, 661, 481, "#1b3275");
line(385, 515, 661, 515, "#1b3275");
line(661, 405, 661, 585, "#1b3275");
rect(540, 137, 648, 151, "#4f0c1c");
rect(560, 147, 648, 151, "#672145");
rect(560, 151, 648, 201, "#07163c");
rect(634, 336, 681, 361, "#102863");
rect(640, 231, 708, 328, "#373737");
rect(640, 328, 708, 403, "#606060");
rect(640, 337, 681, 361, "#526080");

// grid
for (let k = 0; k < 35; k++) line(X0 + k * 33.6, 83, X0 + k * 33.6, BASE, "rgba(150,165,200,.07)");
for (let k = 0; k < 18; k++) line(33, 84.4 + k * 28.6, 1205, 84.4 + k * 28.6, "rgba(150,165,200,.07)");

// mid levels
line(55, 256, 560, 256, "#7c1c32", "4 3");
line(540, 143.5, 648, 143.5, "#a42845", "4 3");
line(560, 174.5, 648, 174.5, "#3d59b0", "4 3");
line(392, 410, 668, 410, "#3650a0", "4 3");
line(385, 498, 661, 498, "#3650a0", "4 3");
line(33, 546, 661, 546, "#32498c", "4 3");
add("text", { x: 299, y: 259, fill: "#74182c" }, "IFVG");
add("text", { x: 584, y: 147, fill: "#8e1f38" }, "IFVG");
add("text", { x: 521, y: 412, fill: "#2f4cb0" }, "FVG");

// volume: index of first bar is -3; letter is direction, number is the bar's top
const volumes = "r600 g602 r600 r536 g531 g542 r521 r555 r542 g516 r548 r489 r526 r539 g529 r561 r549 g583 g550 g532 g558 r559 r512 r540 g538 r557 r531 r560 r529 r538 r540 g560 r560 r482 g507 g534 g534 g549 r559 r546 g522 r552 r556 g556 g550 r557 r562 r559 r552 g568 r563 r567 g579 g556 g562 g540 g537 r566 g569 g579 g557 r575 g555 g521 r568 g582 r576 g567 r578 g586 r532 g567 g562 r568 g577 g576 g575 g568 r574 r559 g570 r564 g576 r569 g579 r574 g581 r583 r572 r582 r549 g564 r568 g548 r575 g584";
volumes.split(" ").forEach((v, n) => {
  const i = n - 3, x = X0 + i * STEP;
  const late = i > 90;
  const fill = v[0] === "r" ? (late ? "#85213a" : "#7b2b4e") : (late ? "#226b50" : "#216e68");
  rect(Math.max(33, x - 3), +v.slice(1), x + 3, BASE, fill);
});

// candles: index, direction, high, body top, body bottom, low
const candles = `9w83,83,83,119 10w83,83,98,133 11b83,83,92,152 12w83,83,116,122 13w84,116,145,193 14b98,113,147,162
15b103,103,114,207 16b83,83,104,110 18w83,83,83,98 19w83,83,196,233 20w144,197,209,240 21b130,153,208,258 22w150,154,238,243
23w202,235,241,311 24w227,240,292,300 25w264,293,358,407 26w323,358,460,465 27w439,459,523,524 28b410,420,523,530
29w375,421,429,506 30w491,491,542,607 31b412,517,540,590 32b494,506,518,614 33b428,437,509,530 34b390,405,439,497
35w390,403,432,476 36w397,432,467,510 37b319,421,466,488 38w413,420,503,507 39w496,502,556,588 40b438,446,556,556
41b368,403,447,481 42w360,402,427,450 43w412,431,453,504 44w425,455,512,538 45w498,514,539,577 46b530,537,539,577
47w481,536,537,573 48w486,537,545,577 49b519,524,544,579 50b441,455,525,545 51b352,361,459,481 52b284,296,361,379
53b228,285,301,330 54w255,285,333,348 55b300,317,335,368 56b286,291,318,341 57b200,205,291,293 58w188,204,208,256
59b139,147,207,228 60b83,110,147,163 61w96,111,159,181 62b105,153,162,170 63w132,153,205,212 64b159,175,204,252
65w160,178,218,263 66b186,205,220,258 67w194,205,349,392 68b281,287,349,355 69b193,220,287,288 70w211,222,234,293
71b174,193,232,241 72b151,185,195,210 73b125,131,187,202 74b83,83,132,136 75w83,83,140,147 76w139,139,256,256
77b201,225,254,278 78w217,225,301,327 79b276,289,301,345 80w240,290,297,328 81b225,241,295,300 82w211,242,265,299
83b187,203,265,286 84w190,205,230,248 85w210,231,286,313 86w283,283,297,335 87w297,297,403,426 88b379,379,403,433
89w364,379,433,463 90b309,337,433,434 91w290,338,343,349 92b304,328,342,342`;
candles.split(/\s+/).forEach(c => {
  const [, i, dir, rest] = c.match(/^(\d+)([wb])(.*)$/);
  const [high, top, bottom, low] = rest.split(",").map(Number);
  const x = X0 + i * STEP;
  line(x, high, x, low, dir === "w" ? "#b9b9b9" : "#2743a5");
  if (bottom > top) rect(x - 2.7, top, x + 2.7, bottom, dir === "w" ? "#fff" : "#3360ee");
});

// drawn levels
line(33, 495.5, 56, 495.5, "#a9b0c0");
line(506, 392, 607, 392, "#c9c9c9");
line(291, 588, 694, 588, "#8ba5a2");
line(616, 264, 625, 264, "#aaa");
add("text", { x: 616, y: 263, fill: "#ddd", style: "font-size:6px" }, "OSG");
line(33, 328.5, 1205, 328.5, "#1c2a60", "1 2");

const prices = document.getElementById("prices");
for (let p = 20980; p >= 20800; p -= 10) {
  const li = document.createElement("li");
  li.textContent = p.toLocaleString("en-US", { minimumFractionDigits: 2 });
  prices.appendChild(li);
}
const times = document.getElementById("times");
for (let m = 570; m <= 740; m += 5) {
  const li = document.createElement("li");
  li.textContent = String(Math.floor(m / 60)).padStart(2, "0") + ":" + String(m % 60).padStart(2, "0");
  if (m % 60 === 0) li.className = "hour";
  times.appendChild(li);
}
```
